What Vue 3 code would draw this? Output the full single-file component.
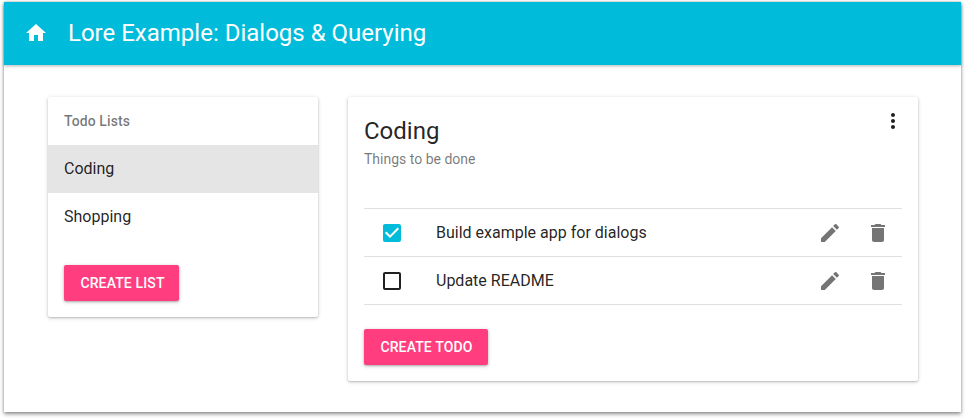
<script setup>
import { ref } from 'vue'

const lists = ref([
  { id: 1, name: 'Coding' },
  { id: 2, name: 'Shopping' },
])
const activeId = ref(1)

const todos = ref([
  { id: 1, title: 'Build example app for dialogs', done: true },
  { id: 2, title: 'Update README', done: false },
])

const icons = {
  home: 'M10 20v-6h4v6h5v-8h3L12 3 2 12h3v8z',
  more: 'M12 8c1.1 0 2-.9 2-2s-.9-2-2-2-2 .9-2 2 .9 2 2 2zm0 2c-1.1 0-2 .9-2 2s.9 2 2 2 2-.9 2-2-.9-2-2-2zm0 6c-1.1 0-2 .9-2 2s.9 2 2 2 2-.9 2-2-.9-2-2-2z',
  checked: 'M19 3H5c-1.11 0-2 .9-2 2v14c0 1.1.89 2 2 2h14c1.11 0 2-.9 2-2V5c0-1.1-.89-2-2-2zm-9 14l-5-5 1.41-1.41L10 14.17l7.59-7.59L19 8l-9 9z',
  unchecked: 'M19 5v14H5V5h14m0-2H5c-1.1 0-2 .9-2 2v14c0 1.1.9 2 2 2h14c1.1 0 2-.9 2-2V5c0-1.1-.9-2-2-2z',
  edit: 'M3 17.25V21h3.75L17.81 9.94l-3.75-3.75L3 17.25zM20.71 7.04c.39-.39.39-1.02 0-1.41l-2.34-2.34c-.39-.39-1.02-.39-1.41 0l-1.83 1.83 3.75 3.75 1.83-1.83z',
  trash: 'M6 19c0 1.1.9 2 2 2h8c1.1 0 2-.9 2-2V7H6v12zM19 4h-3.5l-1-1h-5l-1 1H5v2h14V4z',
}
</script>

<template>
  <div class="window">
    <header class="app-bar">
      <svg class="icon" viewBox="0 0 24 24"><path :d="icons.home" /></svg>
      <h1 class="app-title">Lore Example: Dialogs &amp; Querying</h1>
    </header>

    <main class="content">
      <section class="card lists">
        <div class="subheader">Todo Lists</div>
        <div
          v-for="list in lists"
          :key="list.id"
          class="list-item"
          :class="{ active: list.id === activeId }"
          @click="activeId = list.id"
        >{{ list.name }}</div>
        <div class="list-actions">
          <button class="button create-list" type="button">CREATE LIST</button>
        </div>
      </section>

      <section class="card detail">
        <div class="card-header">
          <div>
            <h2 class="card-title">Coding</h2>
            <div class="card-subtitle">Things to be done</div>
          </div>
          <svg class="icon more" viewBox="0 0 24 24"><path :d="icons.more" /></svg>
        </div>

        <div class="todos">
          <div v-for="todo in todos" :key="todo.id" class="todo" @click="todo.done = !todo.done">
            <svg class="icon check" :class="{ done: todo.done }" viewBox="0 0 24 24">
              <path :d="todo.done ? icons.checked : icons.unchecked" />
            </svg>
            <span class="todo-title">{{ todo.title }}</span>
            <svg class="icon action" viewBox="0 0 24 24"><path :d="icons.edit" /></svg>
            <svg class="icon action" viewBox="0 0 24 24"><path :d="icons.trash" /></svg>
          </div>
        </div>

        <button class="button create-todo" type="button">CREATE TODO</button>
      </section>
    </main>
  </div>
</template>

<style>
body {
  background: #fff;
  overflow: hidden;
}
</style>

<style scoped>
.window {
  box-sizing: border-box;
  width: 957px;
  height: 410px;
  margin: 2px 4px 6px;
  background: #fff;
  box-shadow: 0 2px 4px rgba(0, 0, 0, 0.45), 0 0 2px rgba(0, 0, 0, 0.15);
  font-family: Roboto, "Liberation Sans", sans-serif;
  color: rgba(0, 0, 0, 0.87);
}

.app-bar {
  display: flex;
  align-items: center;
  gap: 20px;
  height: 63px;
  padding: 0 20px;
  background: #00bcda;
  color: #fff;
  box-shadow: 0 1px 3px rgba(0, 0, 0, 0.3);
}

.icon {
  display: block;
  flex: none;
  width: 24px;
  height: 24px;
  fill: currentColor;
}

.app-bar .icon {
  margin-bottom: 1px;
}

.app-title {
  margin: 0 0 1px;
  font-size: 24px;
  font-weight: 400;
  line-height: 32px;
}

.content {
  display: flex;
  align-items: flex-start;
  gap: 30px;
  padding: 32px 43px 0 44px;
}

.card {
  box-sizing: border-box;
  border-radius: 2px;
  background: #fff;
  box-shadow: 0 1px 4px rgba(0, 0, 0, 0.16), 0 1px 2px rgba(0, 0, 0, 0.18);
}

.lists {
  flex: none;
  width: 270px;
  height: 220px;
}

.subheader {
  padding-left: 16px;
  font-size: 14px;
  font-weight: 500;
  line-height: 48px;
  letter-spacing: 0.1px;
  color: rgba(0, 0, 0, 0.54);
}

.list-item {
  padding-left: 16px;
  font-size: 16px;
  line-height: 47px;
  height: 48px;
}

.list-item.active {
  background: #e5e5e5;
}

.list-actions {
  padding: 24px 16px 0;
}

.button {
  box-sizing: border-box;
  display: block;
  height: 36px;
  margin: 0;
  padding: 0 0 0 16.4px;
  border: 0;
  border-radius: 2px;
  background: #ff3d7f;
  box-shadow: 0 1px 4px rgba(0, 0, 0, 0.2), 0 1px 2px rgba(0, 0, 0, 0.2);
  color: #fff;
  font-family: inherit;
  font-size: 14px;
  font-weight: 500;
  line-height: 36px;
  letter-spacing: 0.13px;
  text-align: left;
  white-space: nowrap;
}

.create-list {
  width: 115px;
}

.create-todo {
  width: 124px;
}

.detail {
  flex: none;
  width: 570px;
  height: 284px;
  padding: 0 16px;
}

.card-header {
  display: flex;
  justify-content: space-between;
  height: 111px;
}

.card-title {
  margin: 16px 0 0;
  font-size: 24px;
  font-weight: 400;
  line-height: 36px;
}

.card-subtitle {
  font-size: 14px;
  line-height: 20px;
  color: rgba(0, 0, 0, 0.54);
}

.more {
  margin: 12px -3px 0 0;
}

.todos {
  margin-bottom: 24px;
  border-top: 1px solid #e0e0e0;
}

.todo {
  box-sizing: border-box;
  display: flex;
  align-items: center;
  height: 48px;
  padding: 1px 12px 0 16px;
  border-bottom: 1px solid #e0e0e0;
}

.check {
  margin-right: 32px;
}

.check.done {
  color: #00bcda;
}

.todo-title {
  flex: 1;
  margin-bottom: 1px;
  font-size: 16px;
  line-height: 24px;
}

.action {
  color: #757575;
}

.action + .action {
  margin-left: 24px;
}
</style>
